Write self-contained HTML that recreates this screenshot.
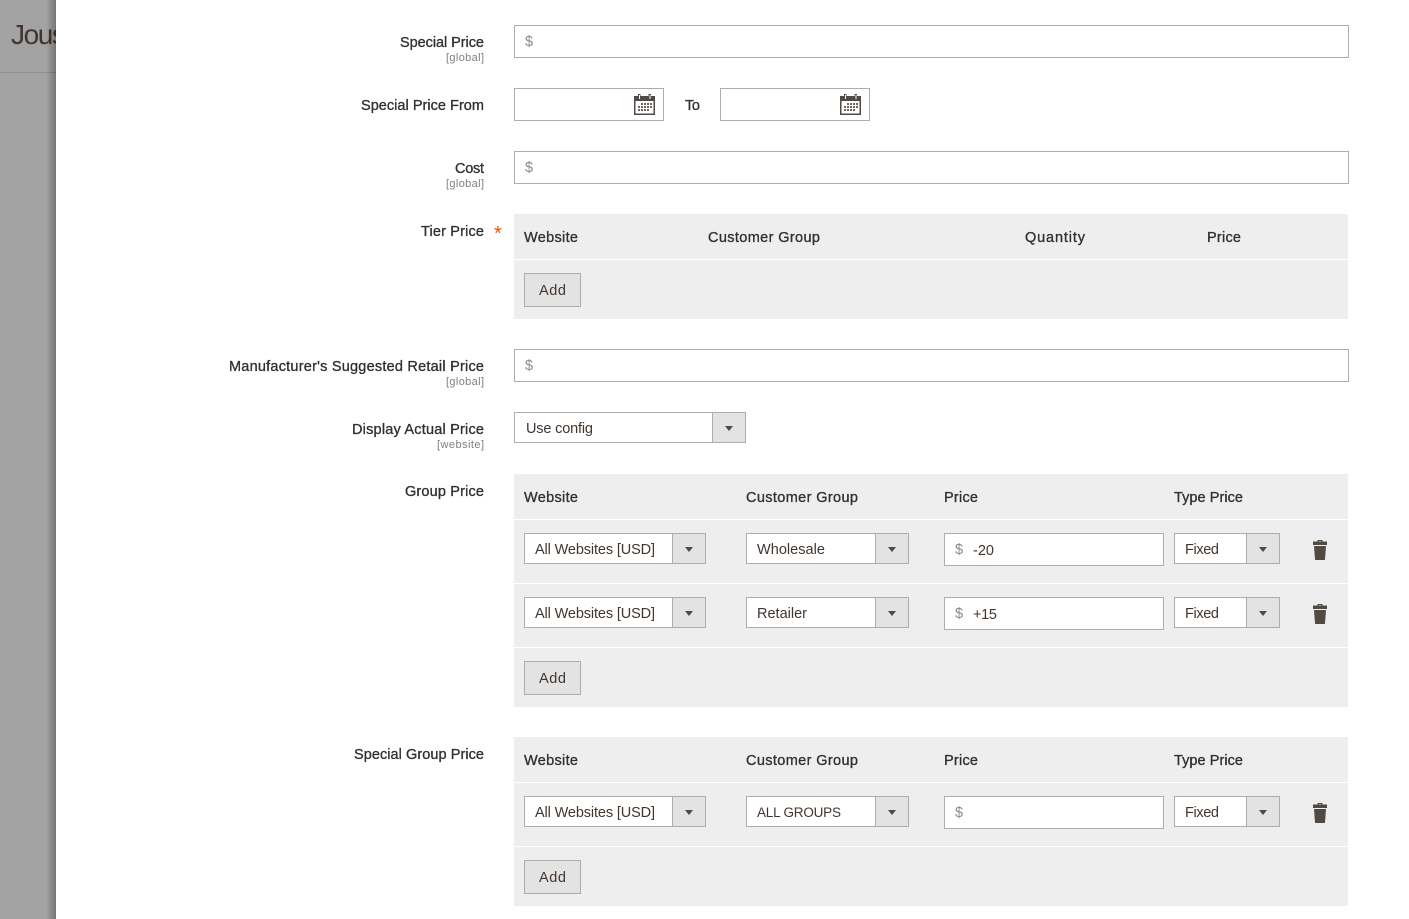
<!DOCTYPE html>
<html lang="en">
<head>
<meta charset="utf-8">
<title>Advanced Pricing</title>
<style>
html,body{margin:0;padding:0;width:1409px;height:919px;overflow:hidden;background:#fff}
svg{display:block}
text{font-family:"Liberation Sans",Arial,sans-serif;white-space:pre}
.l{font-size:14.5px;fill:#303030;stroke:#303030;stroke-width:.32px}
.h{font-size:14.5px;fill:#303030;stroke:#303030;stroke-width:.32px}
.s{font-size:11px;fill:#808080}
.v{font-size:14.5px;fill:#41362f}
.d{font-size:14.5px;fill:#8a8a8a}
.b{fill:#fff;stroke:#adadad;stroke-width:1}
.a{fill:#e3e3e3;stroke:#adadad;stroke-width:1}
.t{fill:#eee}
.w{fill:#fff}
</style>
</head>
<body>
<svg width="1409" height="919" viewBox="0 0 1409 919" xmlns="http://www.w3.org/2000/svg">
<defs>
<linearGradient id="sh" x1="0" x2="1" y1="0" y2="0">
<stop offset="0" stop-color="#000" stop-opacity="0"/>
<stop offset="1" stop-color="#000" stop-opacity=".28"/>
</linearGradient>
<g id="cal">
<rect x="0" y="2" width="21" height="19" fill="#514943"/>
<rect x="1.5" y="7" width="18" height="12.5" fill="#fff"/>
<rect x="4" y="0" width="2.5" height="6" fill="#514943"/><rect x="14.5" y="0" width="2.5" height="6" fill="#514943"/>
<rect x="5" y="1" width="1" height="4" fill="#fff"/><rect x="15.5" y="1" width="1" height="4" fill="#fff"/>
<path d="M7 9h2v2H7zM10 9h2v2h-2zM13 9h2v2h-2zM16 9h2v2h-2zM4 12h2v2H4zM7 12h2v2H7zM10 12h2v2h-2zM13 12h2v2h-2zM16 12h2v2h-2zM4 15h2v2H4zM7 15h2v2H7zM10 15h2v2h-2zM13 15h2v2h-2z" fill="#6e6660"/>
</g>
<g id="tr">
<path d="M5 1.5V0h5v1.5h4.5v3.5H.5V1.5zM6.2 1.5h2.6V1H6.200z" fill="#514943" fill-rule="evenodd"/>
<path d="M1.500 6h12l-1 13.500a.8.8 0 0 1-.8.500H3.300a.8.8 0 0 1-.8-.5z" fill="#514943"/>
</g>
<path id="ar" d="M0 0h8l-4 5z" fill="#514943"/>
</defs>

<!-- backdrop -->
<rect x="0" y="0" width="56" height="919" fill="#a3a3a3"/>
<rect x="0" y="72" width="56" height="1" fill="#8f8f8f"/>
<text x="11" y="44" style="font-size:28px;fill:#41362f" textLength="55" lengthAdjust="spacing">Jous</text>
<rect x="56" y="0" width="1353" height="919" fill="#fff"/>
<rect x="46" y="0" width="10" height="919" fill="url(#sh)"/>

<!-- Special price -->
<text class="l" x="484" y="47" text-anchor="end" textLength="84">Special Price</text>
<text class="s" x="484" y="61" text-anchor="end" textLength="38">[global]</text>
<rect class="b" x="514.500" y="25.500" width="834" height="32"/>
<text class="d" x="525" y="46">$</text>

<!-- dates -->
<text class="l" x="484" y="110" text-anchor="end" textLength="123">Special Price From</text>
<rect class="b" x="514.500" y="88.500" width="149" height="32"/>
<use href="#cal" x="634" y="94"/>
<text class="l" x="685" y="110" textLength="15">To</text>
<rect class="b" x="720.500" y="88.500" width="149" height="32"/>
<use href="#cal" x="840" y="94"/>

<!-- cost -->
<text class="l" x="484" y="173" text-anchor="end" textLength="29">Cost</text>
<text class="s" x="484" y="187" text-anchor="end" textLength="38">[global]</text>
<rect class="b" x="514.500" y="151.500" width="834" height="32"/>
<text class="d" x="525" y="172">$</text>

<!-- tier price -->
<text class="l" x="484" y="236" text-anchor="end" textLength="63">Tier Price</text>
<text x="494" y="240" style="font-size:20px;fill:#eb5202">*</text>
<rect class="t" x="514" y="214" width="834" height="105"/>
<rect class="w" x="514" y="259" width="834" height="1"/>
<text class="h" x="524" y="242" textLength="54">Website</text>
<text class="h" x="708" y="242" textLength="112">Customer Group</text>
<text class="h" x="1025" y="242" textLength="60">Quantity</text>
<text class="h" x="1207" y="242" textLength="34">Price</text>
<rect class="a" x="524.500" y="273.500" width="56" height="33"/>
<text class="v" x="539" y="295" textLength="27">Add</text>

<!-- MSRP -->
<text class="l" x="484" y="371" text-anchor="end" textLength="255">Manufacturer's Suggested Retail Price</text>
<text class="s" x="484" y="385" text-anchor="end" textLength="38">[global]</text>
<rect class="b" x="514.500" y="349.500" width="834" height="32"/>
<text class="d" x="525" y="370">$</text>

<!-- display actual price -->
<text class="l" x="484" y="434" text-anchor="end" textLength="132">Display Actual Price</text>
<text class="s" x="484" y="448" text-anchor="end" textLength="47">[website]</text>
<rect class="b" x="514.500" y="412.500" width="231" height="30"/>
<rect class="a" x="712.500" y="412.500" width="33" height="30"/>
<use href="#ar" x="725" y="426"/>
<text class="v" x="526" y="433" textLength="67">Use config</text>

<!-- group price -->
<text class="l" x="484" y="496" text-anchor="end" textLength="79">Group Price</text>
<rect class="t" x="514" y="474" width="834" height="233"/>
<rect class="w" x="514" y="519" width="834" height="1"/>
<rect class="w" x="514" y="583" width="834" height="1"/>
<rect class="w" x="514" y="647" width="834" height="1"/>
<text class="h" x="524" y="502" textLength="54">Website</text>
<text class="h" x="746" y="502" textLength="112">Customer Group</text>
<text class="h" x="944" y="502" textLength="34">Price</text>
<text class="h" x="1174" y="502" textLength="69">Type Price</text>

<rect class="b" x="524.500" y="533.500" width="181" height="30"/>
<rect class="a" x="672.500" y="533.500" width="33" height="30"/>
<use href="#ar" x="685" y="547"/>
<text class="v" x="535" y="554" textLength="120">All Websites [USD]</text>
<rect class="b" x="746.500" y="533.500" width="162" height="30"/>
<rect class="a" x="875.500" y="533.500" width="33" height="30"/>
<use href="#ar" x="888" y="547"/>
<text class="v" x="757" y="554" textLength="68">Wholesale</text>
<rect class="b" x="944.500" y="533.500" width="219" height="32"/>
<text class="d" x="955" y="554">$</text>
<text class="v" x="973" y="555" textLength="21">-20</text>
<rect class="b" x="1174.500" y="533.500" width="105" height="30"/>
<rect class="a" x="1246.500" y="533.500" width="33" height="30"/>
<use href="#ar" x="1259" y="547"/>
<text class="v" x="1185" y="554" textLength="34">Fixed</text>
<use href="#tr" x="1312.500" y="540"/>

<rect class="b" x="524.500" y="597.500" width="181" height="30"/>
<rect class="a" x="672.500" y="597.500" width="33" height="30"/>
<use href="#ar" x="685" y="611"/>
<text class="v" x="535" y="618" textLength="120">All Websites [USD]</text>
<rect class="b" x="746.500" y="597.500" width="162" height="30"/>
<rect class="a" x="875.500" y="597.500" width="33" height="30"/>
<use href="#ar" x="888" y="611"/>
<text class="v" x="757" y="618" textLength="50">Retailer</text>
<rect class="b" x="944.500" y="597.500" width="219" height="32"/>
<text class="d" x="955" y="618">$</text>
<text class="v" x="973" y="619" textLength="24">+15</text>
<rect class="b" x="1174.500" y="597.500" width="105" height="30"/>
<rect class="a" x="1246.500" y="597.500" width="33" height="30"/>
<use href="#ar" x="1259" y="611"/>
<text class="v" x="1185" y="618" textLength="34">Fixed</text>
<use href="#tr" x="1312.500" y="604"/>

<rect class="a" x="524.500" y="661.500" width="56" height="33"/>
<text class="v" x="539" y="683" textLength="27">Add</text>

<!-- special group price -->
<text class="l" x="484" y="759" text-anchor="end" textLength="130">Special Group Price</text>
<rect class="t" x="514" y="737" width="834" height="169"/>
<rect class="w" x="514" y="782" width="834" height="1"/>
<rect class="w" x="514" y="846" width="834" height="1"/>
<text class="h" x="524" y="765" textLength="54">Website</text>
<text class="h" x="746" y="765" textLength="112">Customer Group</text>
<text class="h" x="944" y="765" textLength="34">Price</text>
<text class="h" x="1174" y="765" textLength="69">Type Price</text>

<rect class="b" x="524.500" y="796.500" width="181" height="30"/>
<rect class="a" x="672.500" y="796.500" width="33" height="30"/>
<use href="#ar" x="685" y="810"/>
<text class="v" x="535" y="817" textLength="120">All Websites [USD]</text>
<rect class="b" x="746.500" y="796.500" width="162" height="30"/>
<rect class="a" x="875.500" y="796.500" width="33" height="30"/>
<use href="#ar" x="888" y="810"/>
<text class="v" x="757" y="817" style="font-size:13.5px" textLength="84">ALL GROUPS</text>
<rect class="b" x="944.500" y="796.500" width="219" height="32"/>
<text class="d" x="955" y="817">$</text>
<rect class="b" x="1174.500" y="796.500" width="105" height="30"/>
<rect class="a" x="1246.500" y="796.500" width="33" height="30"/>
<use href="#ar" x="1259" y="810"/>
<text class="v" x="1185" y="817" textLength="34">Fixed</text>
<use href="#tr" x="1312.500" y="803"/>

<rect class="a" x="524.500" y="860.500" width="56" height="33"/>
<text class="v" x="539" y="882" textLength="27">Add</text>
</svg>
</body>
</html>
